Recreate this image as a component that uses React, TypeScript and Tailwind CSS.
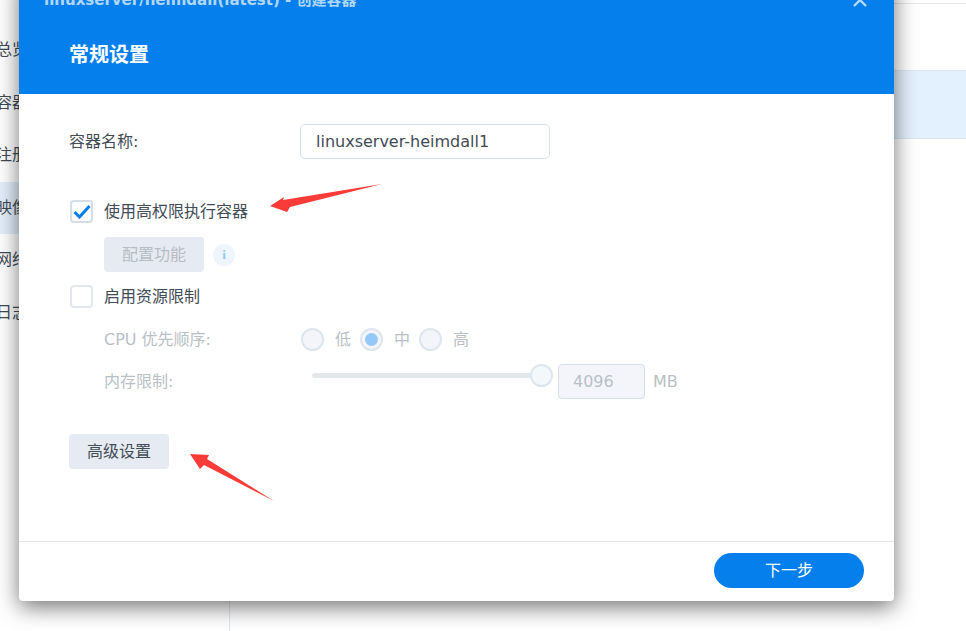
import React from "react";

const font = { fontFamily: '"DejaVu Sans", "Noto Sans CJK SC", sans-serif' };

function Radio({ checked, label }: { checked?: boolean; label: string }) {
  return (
    <div className="flex items-center">
      <span className="flex h-[23px] w-[23px] items-center justify-center rounded-full border-2 border-[#dde5ee] bg-[#f3f5fa]">
        {checked && <span className="h-[13px] w-[13px] rounded-full bg-[#94c8f8]" />}
      </span>
      <span className="ml-[11px] w-[25px] text-[16px] text-[#b9bfc6]">{label}</span>
    </div>
  );
}

export default function App() {
  return (
    <div className="relative flex h-[631px] w-[966px] overflow-hidden bg-white text-[#414b55]" style={font}>
      {/* background app */}
      <aside className="w-[230px] shrink-0 border-r border-[#dfe5ed] pt-[24px] text-[16px] text-[#414b55]">
        {["总览", "容器", "注册表", "映像", "网络", "日志"].map((t, i) => (
          <div key={t} className={`flex h-[52.5px] items-center ${i === 3 ? "bg-[#e3effb]" : ""}`}>
            <span className="-ml-[4px]">{t}</span>
          </div>
        ))}
      </aside>
      <main className="flex-1">
        <div className="h-[4px] border-b border-[#e6e6e6]" />
        <div className="mt-[66px] h-[69px] border-y border-[#dfe5ed] bg-[#e3f0fd]" />
      </main>

      {/* dialog */}
      <div className="absolute left-[19px] top-[-24px] flex h-[625px] w-[875px] flex-col overflow-hidden rounded-b-[4px] bg-white shadow-[0_6px_22px_rgba(0,0,0,0.55)]">
        <header className="h-[118px] shrink-0 bg-[#057feb] text-white">
          <div className="flex h-[48px] items-center justify-between pl-[25px] pr-[27px]">
            <span className="text-[15px] font-bold text-white/70">linuxserver/heimdall(latest) - 创建容器</span>
            <svg width="14" height="14" viewBox="0 0 14 14" className="opacity-70">
              <path d="M1 1 L13 13 M13 1 L1 13" stroke="#fff" strokeWidth="2.4" fill="none" />
            </svg>
          </div>
          <h1 className="ml-[50px] mt-[17px] text-[20px] font-bold leading-[28px]">常规设置</h1>
        </header>

        <div className="flex-1 px-[50px] pt-[30px]">
          <div className="flex h-[35px] items-center">
            <label className="w-[231px] text-[16px]">容器名称:</label>
            <div className="flex h-[35px] w-[250px] items-center rounded-[5px] border border-[#d5e0ec] px-[15px] text-[16px]">
              linuxserver-heimdall1
            </div>
          </div>

          <div className="mt-[41px] flex h-[23px] items-center pl-[1px]">
            <span className="flex h-[23px] w-[23px] items-center justify-center rounded-[4px] border-2 border-[#d5dde6] bg-white">
              <svg width="18" height="15" viewBox="0 0 18 15">
                <path d="M1.5 8 L6.5 13 L16.5 2" stroke="#057feb" strokeWidth="3" fill="none" />
              </svg>
            </span>
            <span className="ml-[11px] text-[16px]">使用高权限执行容器</span>
          </div>

          <div className="ml-[35px] mt-[14px] flex items-center">
            <span className="flex h-[35px] w-[100px] items-center justify-center rounded-[4px] bg-[#e6ebf3] text-[16px] text-[#b5bcc3]">
              配置功能
            </span>
            <span className="ml-[9px] flex h-[22px] w-[22px] items-center justify-center rounded-full bg-[#eef5fd] font-['Liberation_Serif'] text-[13px] font-bold text-[#94c8f8]">
              i
            </span>
          </div>

          <div className="mt-[13px] flex h-[23px] items-center pl-[1px]">
            <span className="h-[23px] w-[23px] rounded-[4px] border-2 border-[#e2e8f0] bg-white" />
            <span className="ml-[11px] text-[16px]">启用资源限制</span>
          </div>

          <div className="ml-[35px] mt-[20px] flex h-[23px] items-center">
            <span className="w-[197px] text-[16px] text-[#b9bfc6]">CPU 优先顺序:</span>
            <div className="flex">
              <Radio label="低" />
              <Radio checked label="中" />
              <Radio label="高" />
            </div>
          </div>

          <div className="ml-[35px] mt-[13px] flex h-[35px]">
            <span className="mt-[6px] w-[208px] text-[16px] text-[#b9bfc6]">内存限制:</span>
            <div className="relative h-[23px] w-[241px]">
              <div className="mt-[9px] h-[5px] w-[225px] rounded-full bg-[#e2e7ea]" />
              <span className="absolute left-[218px] top-0 h-[23px] w-[23px] rounded-full border-2 border-[#dde5ee] bg-[#f3f8fd]" />
            </div>
            <div className="ml-[5px] flex h-[35px] w-[87px] items-center rounded-[4px] border border-[#d5e0ec] bg-[#f3f5fa] px-[14px] text-[16px] text-[#b9bfc6]">
              4096
            </div>
            <span className="ml-[8px] self-center text-[16px] text-[#b9bfc6]">MB</span>
          </div>

          <button className="mt-[35px] flex h-[35px] w-[100px] items-center justify-center rounded-[4px] bg-[#e6ebf3] text-[16px]">
            高级设置
          </button>
        </div>

        <footer className="flex h-[60px] shrink-0 justify-end border-t border-[#e3e8ef] pr-[30px] pt-[11px]">
          <button className="h-[35px] w-[150px] rounded-full bg-[#057feb] text-[16px] text-white">下一步</button>
        </footer>
      </div>

      {/* red annotation arrows */}
      <svg className="pointer-events-none absolute left-0 top-0" width="966" height="631">
        <polygon points="270,206 284,197 283,200 382,184 290,207 287,212" fill="#fb3b38" />
        <polygon points="190,454 209,455 207,459 274,501 204,465 200,469" fill="#fb3b38" />
      </svg>
    </div>
  );
}
